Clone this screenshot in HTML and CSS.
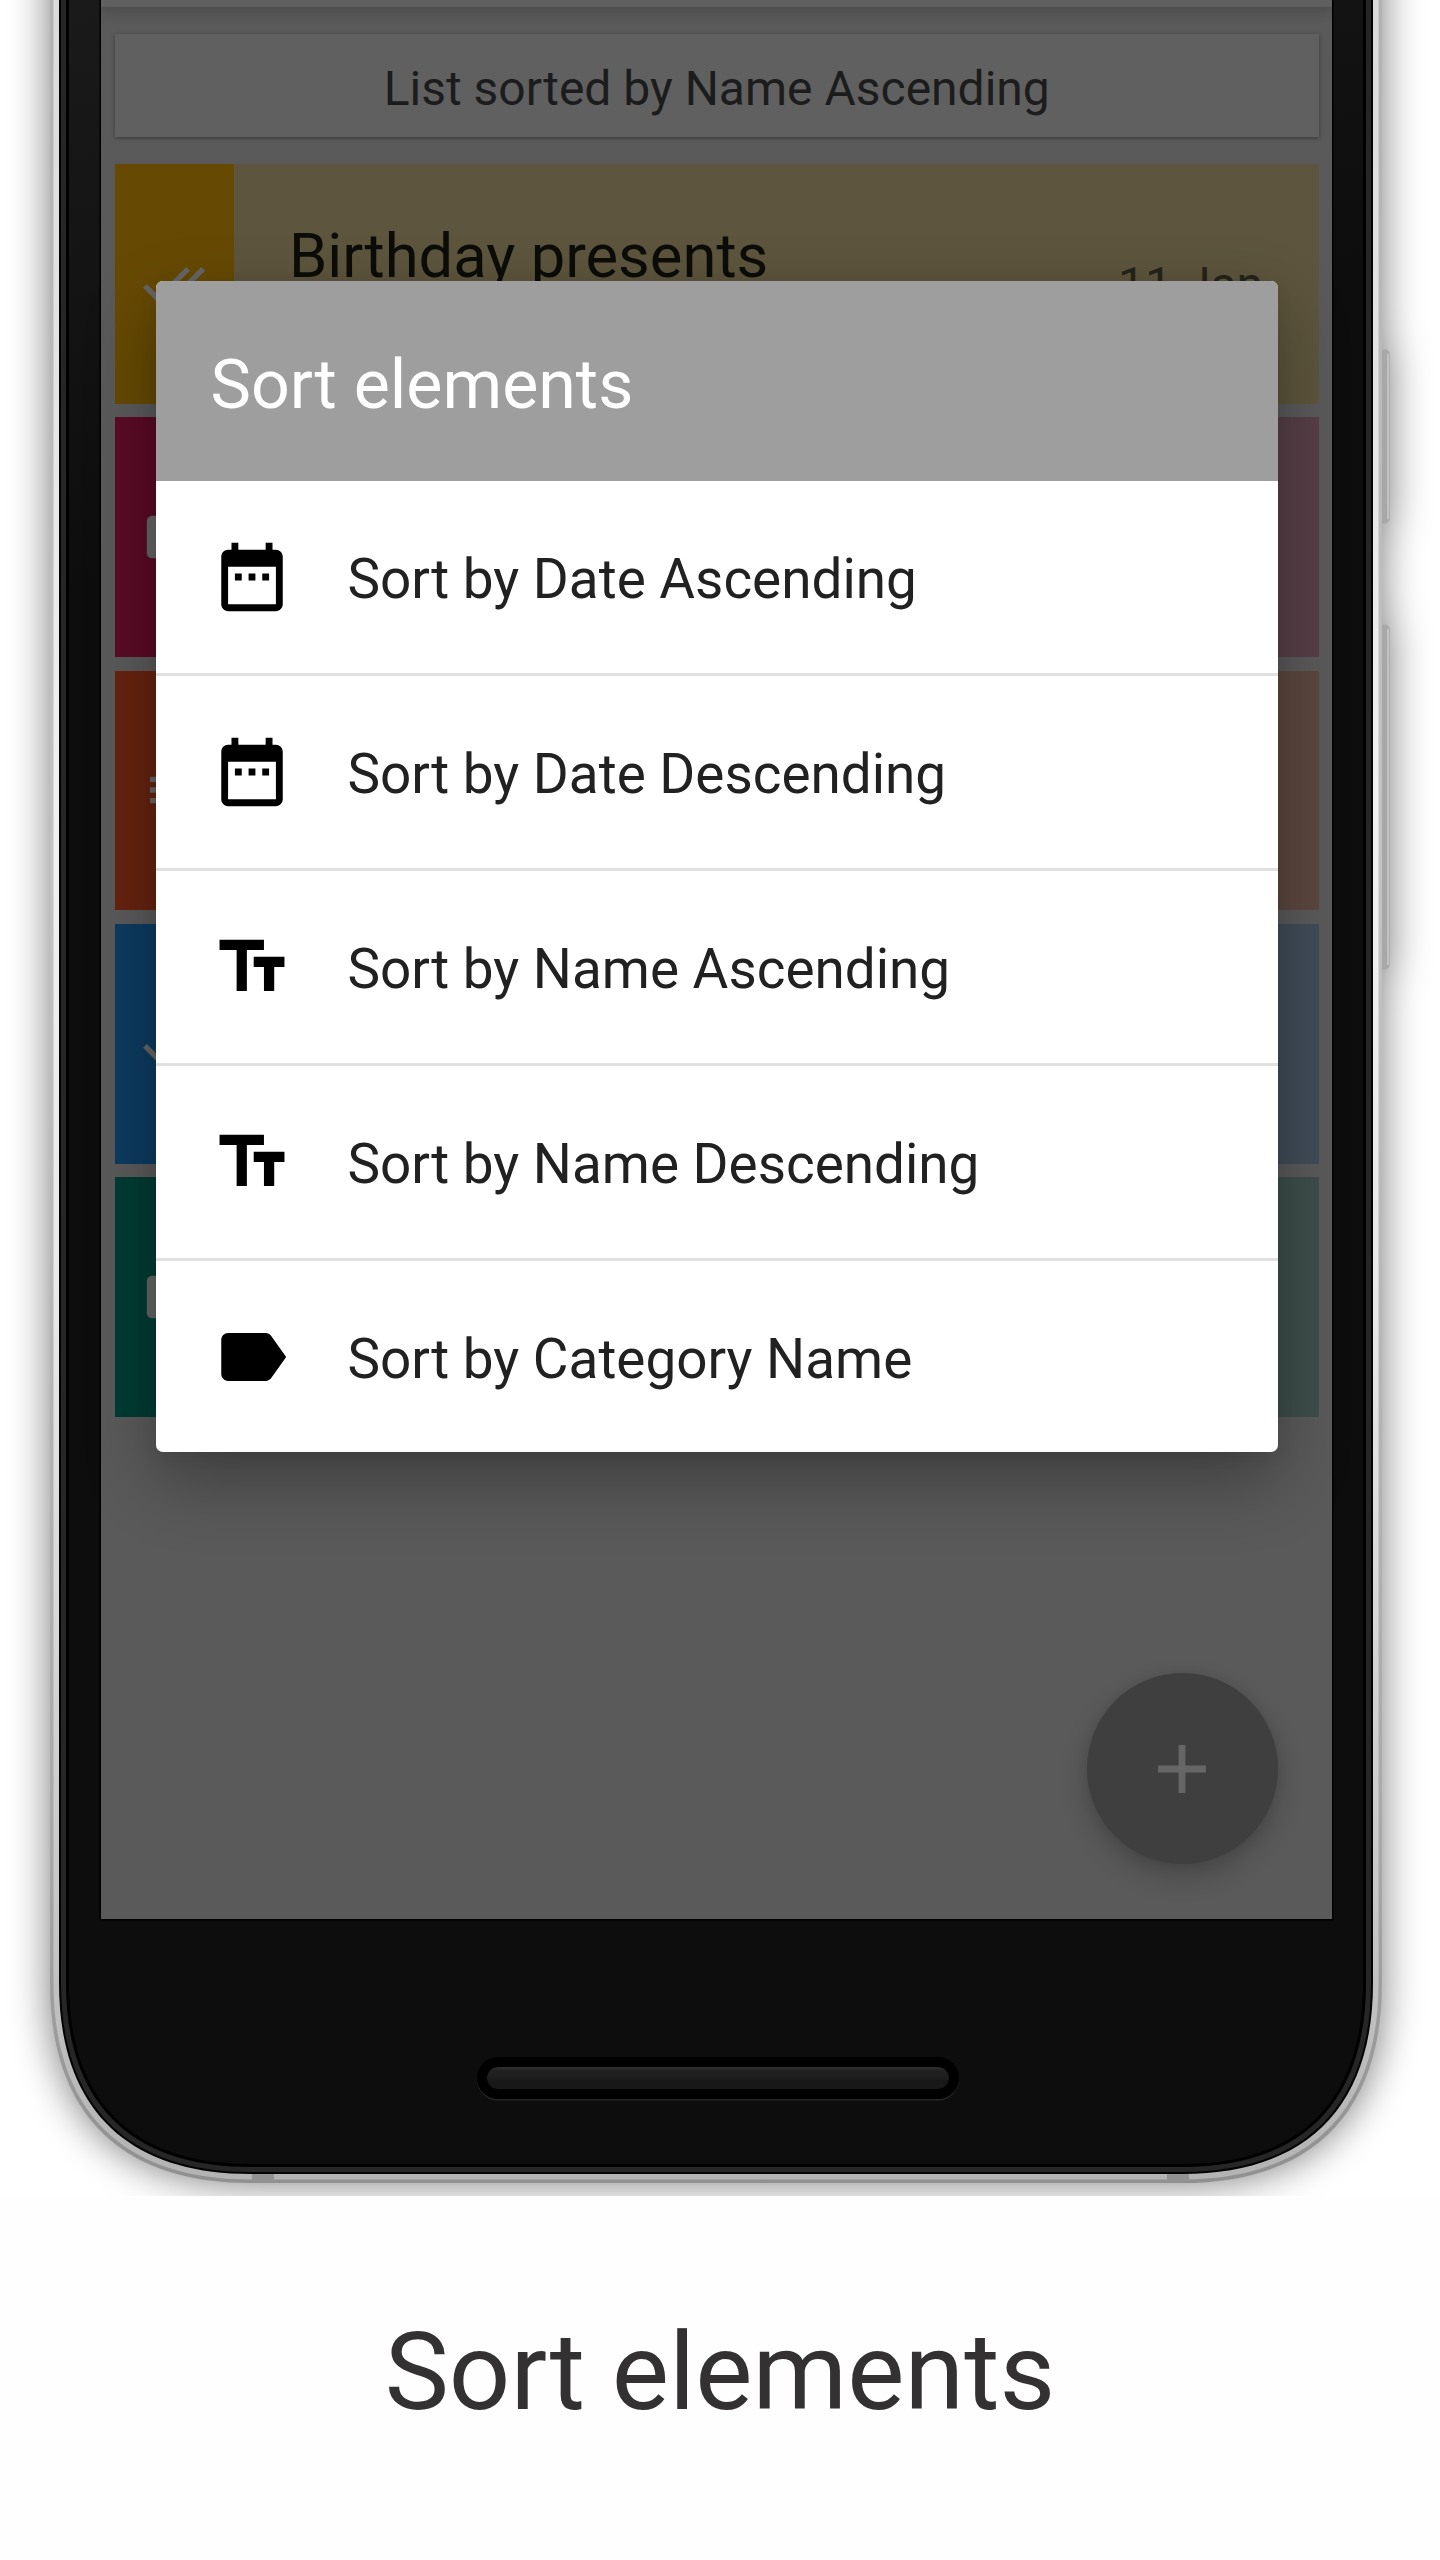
FILE: index.html
```html
<!DOCTYPE html>
<html lang="en">
<head>
<meta charset="utf-8">
<title>Sort elements</title>
<link rel="stylesheet" href="styles.css">
</head>
<body>
<main class="page">
  <section class="device">
    <svg class="frame" width="1440" height="2196" viewBox="0 0 1440 2196" aria-hidden="true">
      <defs>
        <filter id="soft" filterUnits="userSpaceOnUse" x="-60" y="-160" width="1560" height="2460"><feGaussianBlur stdDeviation="20"/></filter>
        <linearGradient id="metal" gradientUnits="userSpaceOnUse" x1="0" y1="0" x2="0" y2="2183">
          <stop offset="0" stop-color="#dadada"/><stop offset=".18" stop-color="#e4e4e4"/><stop offset=".37" stop-color="#f1f1f1"/><stop offset=".6" stop-color="#e8e8e8"/><stop offset=".88" stop-color="#c6c6c6"/><stop offset="1" stop-color="#b3b3b3"/>
        </linearGradient>
        <linearGradient id="rim" gradientUnits="userSpaceOnUse" x1="0" y1="0" x2="0" y2="2183">
          <stop offset="0" stop-color="#b2b2b2"/><stop offset=".4" stop-color="#c2c2c2"/><stop offset=".85" stop-color="#a8a8a8"/><stop offset="1" stop-color="#909090"/>
        </linearGradient>
        <linearGradient id="glass" gradientUnits="userSpaceOnUse" x1="60" y1="0" x2="200" y2="560">
          <stop offset="0" stop-color="#1a1a1a"/><stop offset="1" stop-color="#0d0d0d"/>
        </linearGradient>
      </defs>
      <g filter="url(#soft)" opacity=".52">
        <path d="M50-150V1983C50 2113 120 2183 250 2183H1182C1312 2183 1382 2113 1382 1983V-150Z"/>
        <rect x="1370" y="350" width="20" height="174"/><rect x="1370" y="624" width="20" height="346"/>
      </g>
      <g class="key"><rect x="1370.500" y="349.500" width="19" height="174" rx="5"/><rect x="1370.500" y="624.500" width="19" height="345" rx="5"/></g>
      <path class="key-shine" d="M1388 354V519M1388 629V965"/>
      <path fill="url(#rim)" d="M50-50V1983C50 2113 120 2183 250 2183H1182C1312 2183 1382 2113 1382 1983V-50Z"/>
      <path fill="url(#metal)" d="M53.500-50V1983C53.500 2110.700 122.300 2179.500 250 2179.500H1182C1309.700 2179.500 1378.500 2110.700 1378.500 1983V-50Z"/>
      <path fill="#929292" d="M252 2170h22v12.500h-22zM1167 2170h22v12.500h-22z"/>
      <path fill="#030303" d="M59-50V1983C59 2107.200 125.800 2174 250 2174H1182C1306.200 2174 1373 2107.200 1373 1983V-50Z"/>
      <path fill="#262626" d="M61-50V1983C61 2105.900 127.100 2172 250 2172H1182C1304.900 2172 1371 2105.900 1371 1983V-50Z"/>
      <path fill="#000" d="M66-50V1983C66 2102.600 130.400 2167 250 2167H1182C1301.600 2167 1366 2102.600 1366 1983V-50Z"/>
      <path fill="url(#glass)" d="M69-50V1983C69 2101 132 2164 250 2164H1182C1300 2164 1363 2101 1363 1983V-50Z"/>
    </svg>

    <div class="screen">
      <div class="toolbar"></div>
      <div class="content">
        <div class="sorted">List sorted by Name Ascending</div>
        <ul class="notes">
          <li class="note yellow"><span class="mark"><svg viewBox="0 0 24 24"><path d="M18 7l-1.410-1.410-6.340 6.340 1.410 1.410L18 7zm4.240-1.410L11.660 16.170 7.480 12l-1.410 1.410L11.660 19l12-12-1.420-1.410zM.41 13.410L6 19l1.410-1.410L1.830 12 .41 13.410z"/></svg></span><span class="name">Birthday presents</span><span class="date">11 Jan</span></li>
          <li class="note pink"><span class="mark"><svg viewBox="0 0 24 24"><rect x="1.800" y="4" width="20.400" height="16" rx="2"/></svg></span></li>
          <li class="note orange"><span class="mark"><svg viewBox="0 0 24 24"><path d="M3 9h18V7H3zm0 4h18v-2H3zm0 4h18v-2H3z"/></svg></span></li>
          <li class="note blue"><span class="mark"><svg viewBox="0 0 24 24"><path d="M18 7l-1.410-1.410-6.340 6.340 1.410 1.410L18 7zm4.240-1.410L11.660 16.170 7.480 12l-1.410 1.410L11.660 19l12-12-1.420-1.410zM.41 13.410L6 19l1.410-1.410L1.830 12 .41 13.410z"/></svg></span></li>
          <li class="note green"><span class="mark"><svg viewBox="0 0 24 24"><rect x="1.800" y="4" width="20.400" height="16" rx="2"/></svg></span></li>
        </ul>
      </div>
      <div class="fab"><svg viewBox="0 0 24 24"><path d="M19 13h-6v6h-2v-6H5v-2h6V5h2v6h6z"/></svg></div>

      <div class="dialog" role="dialog">
        <h2 class="dialog-title">Sort elements</h2>
        <ul class="options">
          <li><svg viewBox="0 0 24 24"><path d="M9 11H7v2h2v-2zm4 0h-2v2h2v-2zm4 0h-2v2h2v-2zm2-7h-1V2h-2v2H8V2H6v2H5c-1.110 0-1.990.9-1.990 2L3 20c0 1.100.89 2 2 2h14c1.100 0 2-.9 2-2V6c0-1.100-.9-2-2-2zm0 16H5V9h14v11z"/></svg><span>Sort by Date Ascending</span></li>
          <li><svg viewBox="0 0 24 24"><path d="M9 11H7v2h2v-2zm4 0h-2v2h2v-2zm4 0h-2v2h2v-2zm2-7h-1V2h-2v2H8V2H6v2H5c-1.110 0-1.990.9-1.990 2L3 20c0 1.100.89 2 2 2h14c1.100 0 2-.9 2-2V6c0-1.100-.9-2-2-2zm0 16H5V9h14v11z"/></svg><span>Sort by Date Descending</span></li>
          <li><svg viewBox="0 0 24 24"><path d="M2.500 4v3h5v12h3V7h5V4h-13zm19 5h-9v3h3v7h3v-7h3V9z"/></svg><span>Sort by Name Ascending</span></li>
          <li><svg viewBox="0 0 24 24"><path d="M2.500 4v3h5v12h3V7h5V4h-13zm19 5h-9v3h3v7h3v-7h3V9z"/></svg><span>Sort by Name Descending</span></li>
          <li><svg viewBox="0 0 24 24"><path d="M17.630 5.840C17.270 5.330 16.670 5 16 5L5 5.010C3.900 5.010 3 5.900 3 7v10c0 1.100.9 1.990 2 1.990L16 19c.67 0 1.270-.33 1.630-.84L22 12l-4.370-6.160z"/></svg><span>Sort by Category Name</span></li>
        </ul>
      </div>
    </div>
    <div class="speaker"></div>
  </section>
  <h1 class="caption">Sort elements</h1>
</main>
</body>
</html>
```
FILE: styles.css
```css
* { box-sizing: border-box; }

body {
  margin: 0;
  background: #fefefe;
  font-family: Roboto, "Liberation Sans", sans-serif;
}

ul, h1, h2 { margin: 0; padding: 0; list-style: none; font-weight: 400; }

.page { width: 1440px; height: 2560px; overflow: hidden; }

.device {
  position: relative;
  height: 2196px;
  overflow: hidden;
  background: #fff;
}

.frame { position: absolute; inset: 0; }
.key { fill: #a8a8a8; stroke: #b0b0b0; }
.key-shine { stroke: #dcdcdc; stroke-width: 1; }

/* screen */
.screen {
  position: relative;
  width: 1231px;
  height: 1919px;
  margin-left: 101px;
  background: #5a5a5a;
  box-shadow: 0 0 0 1.5px #000;
}

.toolbar { height: 7px; background: #606060; box-shadow: 0 2px 14px rgba(0, 0, 0, .32); clip-path: inset(0 0 -40px 0); }

.content { padding: 27px 13px 0 13.500px; }

.sorted {
  height: 103px;
  margin-bottom: 27px;
  background: #606060;
  box-shadow: 0 1px 4px rgba(0, 0, 0, .4);
  color: #1c1c1c;
  font-size: 48px;
  line-height: 109px;
  text-align: center;
}

.notes { display: grid; gap: 13.500px; }

.note { display: flex; height: 239.800px; }

.mark {
  display: flex;
  align-items: center;
  justify-content: center;
  width: 119.500px;
}

.mark svg { width: 64px; height: 64px; fill: #666; }

.name {
  flex: 1;
  padding: 54px 0 0 55px;
  color: #0c0d08;
  font-size: 61.500px;
  line-height: 76px;
}

.date {
  padding: 91px 56px 0 0;
  color: #25241a;
  font-size: 48px;
  line-height: 60px;
}

.yellow { background: #5d553d; }
.yellow .mark { background: #664a04; }
.pink { background: #573f48; }
.pink .mark { background: #5a0b26; }
.orange { background: #5b473f; }
.orange .mark { background: #66230f; }
.blue { background: #404c58; }
.blue .mark { background: #0d3b60; }
.green { background: #3e4e4b; }
.green .mark { background: #003c34; }

.fab {
  position: absolute;
  right: 54.500px;
  bottom: 55px;
  display: flex;
  align-items: center;
  justify-content: center;
  width: 191px;
  height: 191px;
  border-radius: 50%;
  background: #3f3f3f;
  box-shadow: 0 12px 28px rgba(0, 0, 0, .2), 0 2px 12px rgba(0, 0, 0, .08);
}

.fab svg { width: 82px; height: 82px; fill: #666; }

/* dialog */
.dialog {
  position: absolute;
  top: 280.600px;
  left: 54.500px;
  width: 1122px;
  overflow: hidden;
  border-radius: 7px;
  background: #fff;
  box-shadow: 0 28px 70px rgba(0, 0, 0, .32), 0 4px 18px rgba(0, 0, 0, .06);
}

.dialog-title {
  height: 200.500px;
  padding: 54px 55px 0;
  background: #9e9e9e;
  color: #fff;
  font-size: 68.100px;
  line-height: 100px;
}

.options li {
  display: flex;
  align-items: center;
  gap: 55px;
  height: 195px;
  padding: 0 55px;
  border-bottom: 3px solid #e0e0e0;
  color: #212121;
  font-size: 54.850px;
}

.options li:last-child { height: 191px; border-bottom: 0; }
.options svg { width: 82px; height: 82px; fill: #000; }
.options span { padding-top: 4px; }

/* lower bezel */
.speaker {
  position: relative;
  width: 482px;
  height: 42px;
  margin: 138px 0 0 476.500px;
  border: 10px solid #000;
  border-radius: 21px;
  background: linear-gradient(#303030, #202020 18%, #1e1e1e 50%, #181818 60%);
  background-clip: padding-box;
  box-shadow: 0 1.500px 1px #292929;
}

.caption {
  padding-top: 111px;
  color: #333132;
  font-size: 108px;
  line-height: 130px;
  text-align: center;
}
```
